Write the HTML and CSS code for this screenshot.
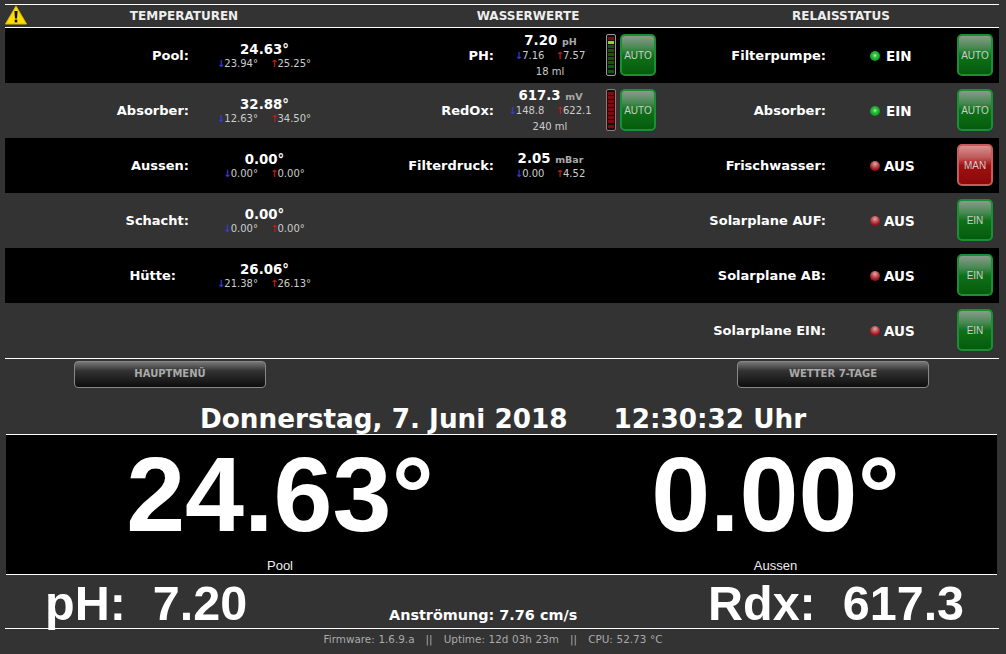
FILE: index.html
```html
<!DOCTYPE html>
<html lang="de">
<head>
  <meta charset="UTF-8" />
  <title>Pool Steuerung</title>
  <link rel="stylesheet" href="styles.css">
</head>
<body>

  <!-- Kopfzeile -->
  <div class="head">
    <svg class="warn" viewBox="0 0 22 20" width="22" height="20">
      <path d="M11 1 L21.5 19 L0.5 19 Z" fill="#ffdc00" stroke="#e0b800" stroke-width="1" stroke-linejoin="round"/>
      <path d="M9.4 6 H12.6 L12 13.5 H10 Z" fill="#111"/>
      <rect x="9.7" y="14.6" width="2.6" height="2.8" fill="#111"/>
    </svg>
    <div>TEMPERATUREN</div>
    <div>WASSERWERTE</div>
    <div>RELAISSTATUS</div>
  </div>

  <!-- Werte -->
  <div class="rows">
    <div class="row dark">
      <div class="label">Pool:</div>
      <div class="val"><b>24.63°</b><small><i class="down">↓</i>23.94° <i class="up">↑</i>25.25°</small></div>
      <div class="label">PH:</div>
      <div class="val wide"><b>7.20 <em>pH</em></b><small><i class="down">↓</i>7.16 <i class="up">↑</i>7.57</small><small class="ml">18 ml</small></div>
      <div class="meter ph"><s></s><s class="on"></s><s></s><s></s><s></s><s></s><s></s><s></s><s></s></div>
      <div class="btn green">AUTO</div>
      <div class="label">Filterpumpe:</div>
      <div class="state"><span class="led gn"></span>EIN</div>
      <div class="btn green">AUTO</div>
    </div>
    <div class="row">
      <div class="label">Absorber:</div>
      <div class="val"><b>32.88°</b><small><i class="down">↓</i>12.63° <i class="up">↑</i>34.50°</small></div>
      <div class="label">RedOx:</div>
      <div class="val wide"><b>617.3 <em>mV</em></b><small><i class="down">↓</i>148.8 <i class="up">↑</i>622.1</small><small class="ml">240 ml</small></div>
      <div class="meter rdx"><s></s><s></s><s></s><s></s><s></s><s></s><s></s><s></s><s></s></div>
      <div class="btn green">AUTO</div>
      <div class="label">Absorber:</div>
      <div class="state"><span class="led gn"></span>EIN</div>
      <div class="btn green">AUTO</div>
    </div>
    <div class="row dark">
      <div class="label">Aussen:</div>
      <div class="val"><b>0.00°</b><small><i class="down">↓</i>0.00° <i class="up">↑</i>0.00°</small></div>
      <div class="label">Filterdruck:</div>
      <div class="val wide"><b>2.05 <em>mBar</em></b><small><i class="down">↓</i>0.00 <i class="up">↑</i>4.52</small></div>
      <div></div>
      <div></div>
      <div class="label">Frischwasser:</div>
      <div class="state"><span class="led rd"></span>AUS</div>
      <div class="btn red">MAN</div>
    </div>
    <div class="row">
      <div class="label">Schacht:</div>
      <div class="val"><b>0.00°</b><small><i class="down">↓</i>0.00° <i class="up">↑</i>0.00°</small></div>
      <div></div><div></div><div></div><div></div>
      <div class="label">Solarplane AUF:</div>
      <div class="state"><span class="led rd"></span>AUS</div>
      <div class="btn green">EIN</div>
    </div>
    <div class="row dark">
      <div class="label short">Hütte:</div>
      <div class="val"><b>26.06°</b><small><i class="down">↓</i>21.38° <i class="up">↑</i>26.13°</small></div>
      <div></div><div></div><div></div><div></div>
      <div class="label">Solarplane AB:</div>
      <div class="state"><span class="led rd"></span>AUS</div>
      <div class="btn green">EIN</div>
    </div>
    <div class="row">
      <div></div><div></div><div></div><div></div><div></div><div></div>
      <div class="label">Solarplane EIN:</div>
      <div class="state"><span class="led rd"></span>AUS</div>
      <div class="btn green">EIN</div>
    </div>
  </div>

  <!-- Menue -->
  <div class="menu">
    <a href="#" class="menu-btn">HAUPTMENÜ</a>
    <a href="#" class="menu-btn">WETTER 7-TAGE</a>
  </div>

  <div class="clock"><span>Donnerstag, 7. Juni 2018</span><span>12:30:32 Uhr</span></div>

  <!-- Grosse Anzeige -->
  <div class="big">
    <div class="big-col"><div class="big-num">24.63°</div><div class="big-name">Pool</div></div>
    <div class="big-col"><div class="big-num">0.00°</div><div class="big-name">Aussen</div></div>
  </div>

  <div class="bottom">
    <div class="bottom-val">pH:&nbsp; 7.20</div>
    <div class="flow">Anströmung: 7.76 cm/s</div>
    <div class="bottom-val">Rdx:&nbsp; 617.3</div>
  </div>

  <footer>Firmware: 1.6.9.a &nbsp; || &nbsp; Uptime: 12d 03h 23m &nbsp; || &nbsp; CPU: 52.73 °C</footer>

</body>
</html>
```
FILE: styles.css
```css
body {
  margin: 0;
  height: 654px;
  overflow: hidden;
  background-color: #333;
  color: #fff;
  font-family: 'DejaVu Sans', sans-serif;
}

/* Kopfzeile */
.head {
  position: relative;
  display: grid;
  grid-template-columns: 358px 330px 296px;
  align-items: center;
  height: 22px;
  margin: 4px 7px 0 5px;
  border-top: 1px solid #fff;
  border-bottom: 1px solid #fff;
  font-size: 12px;
  font-weight: bold;
  text-align: center;
  color: #eee;
}

.warn {
  position: absolute;
  left: 0;
  top: 0;
}

/* Werte */
.rows {
  margin: 0 7px 0 5px;
  border-bottom: 1px solid #fff;
}

.row {
  display: grid;
  grid-template-columns: 184px 150px 155px 112px 14px 36px 170px 131px 36px;
  align-items: center;
  height: 55px;
}

.dark {
  background-color: #000;
}

.label {
  padding-left: 1px;
  font-size: 13px;
  font-weight: bold;
  text-align: right;
}

.label.short {
  padding-right: 13px;
}

.val {
  text-align: center;
  line-height: 13px;
}

.val b {
  display: block;
  font-size: 13.33px;
  line-height: 15px;
}

.val:not(.wide) b {
  padding-left: 1px;
}

.val.wide b {
  padding-left: 2px;
  margin-right: 1px;
}

.val em {
  font-style: normal;
  font-size: 9.5px;
  color: #aaa;
}

.val small {
  display: block;
  font-size: 10px;
  color: #ccc;
}

.val.wide small {
  word-spacing: 8px;
}

.val:not(.wide) small {
  word-spacing: 9px;
}

.val .ml {
  margin-top: 3px;
  word-spacing: 0 !important;
}

.val i {
  font-style: normal;
  font-weight: bold;
  margin-right: -1px;
}

.down {
  color: #3a3ad8;
}

.up {
  color: #c01818;
}

/* Pegel */
.meter {
  display: flex;
  flex-direction: column;
  justify-content: space-between;
  width: 10px;
  height: 42px;
  box-sizing: border-box;
  margin-bottom: 2px;
  padding: 2px 1px;
  border: 1px solid #999;
  border-radius: 2px;
  background-color: #111;
}

.meter s {
  display: block;
  height: 3px;
}

.ph s {
  background-color: #0d5a0d;
}

.ph s:first-child {
  background-color: #7a0d0d;
}

.ph s.on {
  background-color: #7fe01f;
}

.rdx {
  border-color: #a87070;
}

.rdx s {
  background-color: #7a0d0d;
}

/* Schaltflaechen */
.btn {
  display: flex;
  align-items: center;
  justify-content: center;
  box-sizing: border-box;
  width: 36px;
  height: 42px;
  margin-bottom: 2px;
  padding-top: 2px;
  border-radius: 5px;
  font-family: 'Liberation Sans', sans-serif;
  font-size: 10px;
  color: #ccc;
}

.green {
  border: 2px solid #1a8f35;
  background: linear-gradient(#8a9a8a 0%, #4a8a55 30%, #0f7018 52%, #055c0c 100%);
}

.red {
  border: 2px solid #c85a5a;
  background: linear-gradient(#d89090 0%, #c05a5a 30%, #a01010 52%, #8c0808 100%);
}

.state {
  display: flex;
  align-items: center;
  padding-left: 44px;
  font-size: 13.5px;
  font-weight: bold;
}

.led {
  display: inline-block;
  width: 10px;
  height: 10px;
  margin-right: 6px;
  border-radius: 50%;
}

.gn {
  background: radial-gradient(circle at 50% 45%, #a8f0b0 0, #30c040 30%, #0c9a1c 70%, #0a6a14 100%);
}

.rd {
  margin-right: 4px;
  background: radial-gradient(circle at 50% 30%, #d8b0b0 0, #c06060 30%, #a81020 65%, #701018 100%);
}

/* Menue */
.menu {
  display: flex;
  justify-content: space-between;
  padding: 2px 77px 0 74px;
}

.menu-btn {
  width: 192px;
  height: 27px;
  box-sizing: border-box;
  padding-top: 6px;
  border: 1px solid #888;
  border-radius: 4px;
  background: linear-gradient(#777 0%, #333 35%, #0d0d0d 100%);
  color: #aaa;
  font-size: 10px;
  font-weight: bold;
  text-align: center;
  text-decoration: none;
}

.clock {
  display: flex;
  gap: 46px;
  height: 46px;
  box-sizing: border-box;
  padding: 16px 0 0 200px;
  font-size: 26.25px;
  font-weight: bold;
  line-height: 31px;
}

/* Grosse Anzeige */
.big {
  display: grid;
  grid-template-columns: 548px 443px;
  height: 139px;
  margin: 0 9px 0 6px;
  border-top: 1px solid #fff;
  border-bottom: 1px solid #fff;
  background-color: #000;
  text-align: center;
  font-family: 'Liberation Sans', sans-serif;
}

.big-num {
  height: 123px;
  font-size: 106px;
  font-weight: bold;
  line-height: 118px;
}

.big-name {
  font-size: 13px;
  line-height: 16px;
  color: #eee;
}

.bottom {
  display: grid;
  grid-template-columns: 384px 319px 1fr;
  align-items: center;
  height: 53px;
  margin: 0 7px 0 5px;
  border-bottom: 1px solid #fff;
}

.bottom-val {
  font-family: 'Liberation Sans', sans-serif;
  font-size: 48.5px;
  font-weight: bold;
  white-space: pre;
}

.bottom .bottom-val:first-child {
  padding-left: 40px;
}

.flow {
  padding-top: 24px;
  font-size: 14.4px;
  font-weight: bold;
  white-space: nowrap;
}

footer {
  padding-top: 4px;
  color: #aaa;
  font-size: 10.4px;
  word-spacing: 0.4px;
  text-align: center;
  margin-left: -20px;
}
```
